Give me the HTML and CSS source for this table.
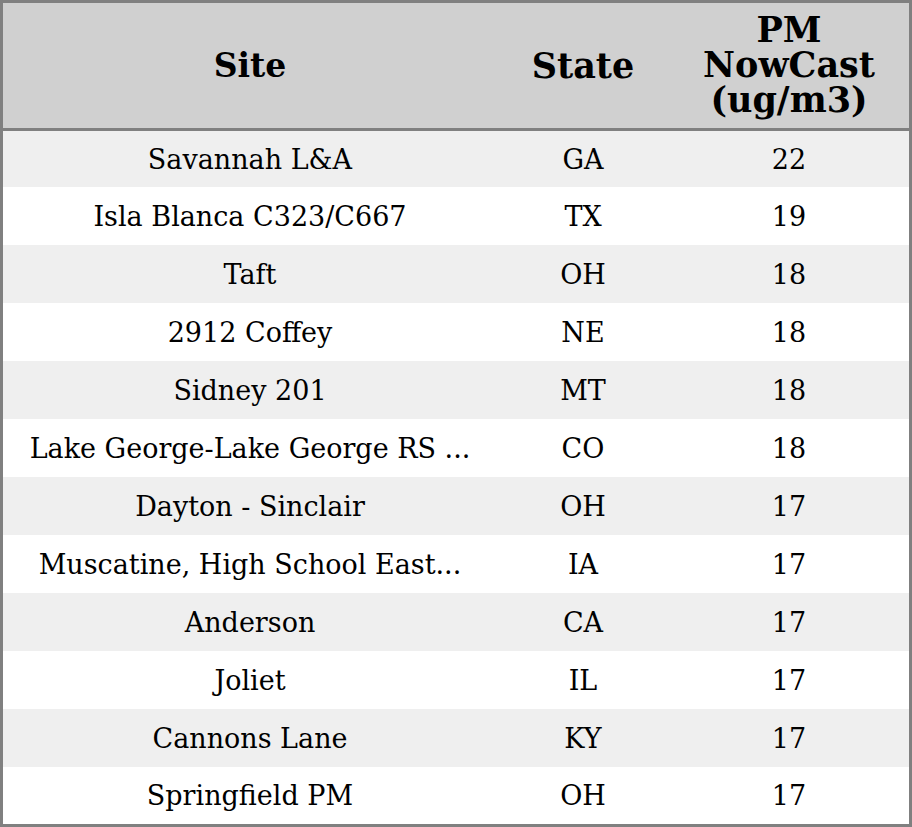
FILE: index.html
```html
<!DOCTYPE html>
<html>
<head>
<meta charset="utf-8">
<link rel="stylesheet" href="styles.css">
</head>
<body>
<table class="aq">
  <colgroup>
    <col class="c-site">
    <col class="c-state">
    <col class="c-pm">
  </colgroup>
  <thead>
    <tr><th class="h-site">Site</th><th class="h-state">State</th><th class="h-pm">PM<br>NowCast<br>(ug/m3)</th></tr>
  </thead>
  <tbody>
    <tr><td>Savannah L&amp;A</td><td>GA</td><td>22</td></tr>
    <tr><td>Isla Blanca C323/C667</td><td>TX</td><td>19</td></tr>
    <tr><td>Taft</td><td>OH</td><td>18</td></tr>
    <tr><td>2912 Coffey</td><td>NE</td><td>18</td></tr>
    <tr><td>Sidney 201</td><td>MT</td><td>18</td></tr>
    <tr><td>Lake George-Lake George RS ...</td><td>CO</td><td>18</td></tr>
    <tr><td>Dayton - Sinclair</td><td>OH</td><td>17</td></tr>
    <tr><td>Muscatine, High School East...</td><td>IA</td><td>17</td></tr>
    <tr><td>Anderson</td><td>CA</td><td>17</td></tr>
    <tr><td>Joliet</td><td>IL</td><td>17</td></tr>
    <tr><td>Cannons Lane</td><td>KY</td><td>17</td></tr>
    <tr><td>Springfield PM</td><td>OH</td><td>17</td></tr>
  </tbody>
</table>
</body>
</html>
```
FILE: styles.css
```css
html, body {
  margin: 0;
  padding: 0;
  background: #ffffff;
}
.aq {
  width: 912px;
  border-collapse: separate;
  border-spacing: 0;
  table-layout: fixed;
  border: 3px solid #808080;
  font-family: "DejaVu Serif", serif;
  color: #000;
}
.c-site { width: 494px; }
.c-state { width: 172px; }
.c-pm { width: 240px; }
.aq th {
  background: #d0d0d0;
  font-weight: bold;
  line-height: 35px;
  height: 125px;
  padding: 0;
  border-bottom: 3px solid #808080;
  text-align: center;
  vertical-align: middle;
}
.aq .h-site { font-size: 33px; }
.aq .h-state { font-size: 35px; }
.aq .h-pm { font-size: 35px; padding-bottom: 3px; height: 122px; }
.aq td {
  font-size: 27px;
  height: 58px;
  padding: 0;
  text-align: center;
  vertical-align: middle;
  white-space: nowrap;
}
.aq tbody tr:first-child td { height: 56px; }
.aq tbody tr:last-child td { height: 57px; }
.aq tbody tr:nth-child(odd) td { background: #efefef; }
```
